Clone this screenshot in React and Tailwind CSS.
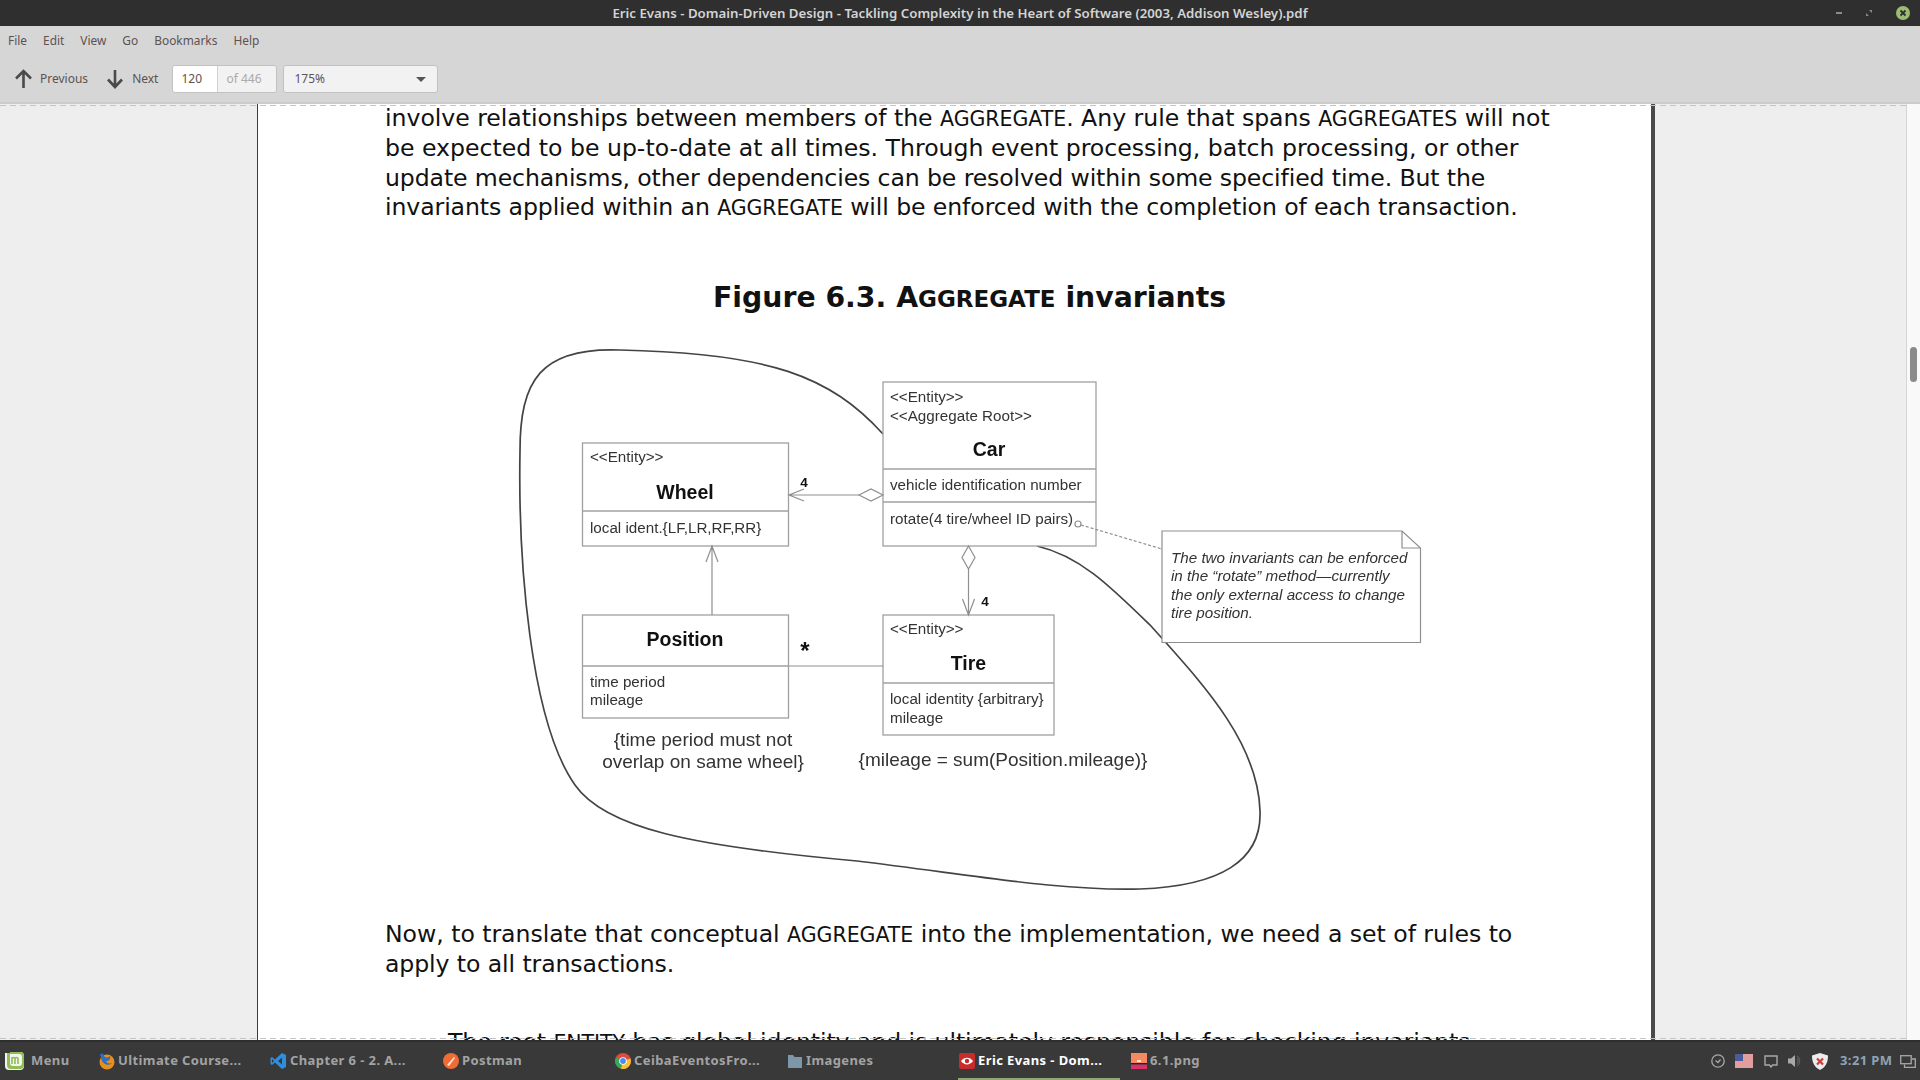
import React from 'react';

const menus = ['File', 'Edit', 'View', 'Go', 'Bookmarks', 'Help'];

const Agg = ({ children }) => <span className="text-[20.5px]">{children}</span>;

const MintIcon = () => (
  <svg width="21" height="20" viewBox="0 0 21 20">
    <path d="M1 2h5v-1h10a4 4 0 0 1 4 4v10a4 4 0 0 1-4 4H5a4 4 0 0 1-4-4z" fill="#f4f4f4" />
    <path d="M3 2h3v10a3 3 0 0 0 3 3h6a3 3 0 0 0 3-3V6a3 3 0 0 0-3-3H6V1h10a4 4 0 0 1 4 4v9a4 4 0 0 1-4 4H7a4 4 0 0 1-4-4z" fill="#8fc04f" />
    <path d="M8 6v7M8 8a1.5 1.5 0 0 1 3 0v5M11 8a1.5 1.5 0 0 1 3 0v5" fill="none" stroke="#8fc04f" strokeWidth="1.6" />
  </svg>
);

const FirefoxIcon = () => (
  <svg width="16" height="18" viewBox="0 0 16 18">
    <circle cx="8" cy="10" r="7.5" fill="#e98f1c" />
    <path d="M1 2c1 3 1 5 2 7 2 4 7 5 10 2-3 1-5 0-6-2 3 0 5-2 4-5-1 1-3 2-5 1-1-1-2-2-2-4-1 1-2 1-3 1z" fill="#2f6fc4" />
  </svg>
);

const VsIcon = () => (
  <svg width="17" height="18" viewBox="0 0 17 18">
    <path d="M12 1l4 2v12l-4 2-7-6.5L2 13 .5 12V6L2 5l3 2.500zM12 5.500L8 9l4 3.500zM2 7v4l2-2z" fill="#2d8fe0" />
  </svg>
);

const PostmanIcon = () => (
  <svg width="16" height="16" viewBox="0 0 16 16">
    <circle cx="8" cy="8" r="8" fill="#ef6c35" />
    <path d="M4 12l7-8 1 1-6 8z" fill="#fbe3d8" />
  </svg>
);

const ChromeIcon = () => (
  <svg width="16" height="16" viewBox="0 0 16 16">
    <circle cx="8" cy="8" r="8" fill="#dd4b3e" />
    <path d="M8 8L1 4.500A8 8 0 0 0 6 15.800z" fill="#3aa757" />
    <path d="M8 8l7.500-2.500A8 8 0 0 1 6 15.800z" fill="#f7c42e" />
    <circle cx="8" cy="8" r="3.800" fill="#fff" />
    <circle cx="8" cy="8" r="2.900" fill="#4a8af4" />
  </svg>
);

const FolderIcon = () => (
  <svg width="14" height="14" viewBox="0 0 14 14">
    <path d="M0 1h5l1.500 2H14v11H0z" fill="#7d97a8" />
  </svg>
);

const EvinceIcon = () => (
  <svg width="16" height="16" viewBox="0 0 16 16">
    <rect width="16" height="16" rx="2" fill="#c92a2a" />
    <path d="M2 8c3-4.500 9-4.500 12 0-3 4.500-9 4.500-12 0z" fill="#fff" />
    <circle cx="8" cy="8" r="2.200" fill="#c92a2a" />
  </svg>
);

const ImageIcon = () => (
  <svg width="16" height="16" viewBox="0 0 16 16">
    <rect width="16" height="10" fill="#f58a62" />
    <rect x="6" y="7" width="4" height="2" fill="#fde2c8" />
    <rect y="10" width="16" height="1.500" fill="#2b2020" />
    <rect y="11.500" width="16" height="4.500" fill="#d8326a" />
  </svg>
);

const Task = ({ icon, label, w, gap = 'gap-[3px]', active }) => (
  <div className={`relative h-full flex items-center ${gap} ${w}`}>
    <span className="flex shrink-0">{icon}</span>
    <span className={`text-[13px] font-bold tracking-[0.4px] whitespace-nowrap ${active ? 'text-white' : 'text-[#a3a3a3]'}`}>{label}</span>
    {active && <span className="absolute left-[-1px] w-[162px] bottom-0 h-[2px] bg-[#8fa86f]" />}
  </div>
);

const Box = ({ x, y, w, h, lines = [] }) => (
  <g fill="none" stroke="#a0a0a0" strokeWidth="1.300">
    <rect x={x} y={y} width={w} height={h} fill="#fff" />
    {lines.map((ly) => <line key={ly} x1={x} x2={x + w} y1={ly} y2={ly} />)}
  </g>
);

const Diagram = () => (
  <svg width="940" height="560" viewBox="500 340 940 560" className="block shrink-0 blur-[0.6px] font-['Liberation_Sans']">
    <path
      d="M883 433C830 375 770 352 620 349C540 346 520 380 520 450C518 560 530 720 575 784C605 827 690 845 857 860C980 875 1060 890 1140 888C1220 885 1262 860 1260 810C1258 740 1200 680 1151 625C1110 585 1080 555 1037 545"
      fill="none"
      stroke="#444"
      strokeWidth="1.700"
    />
    <Box x={883} y={381} w={213} h={164} lines={[468, 501]} />
    <Box x={582.500} y={442} w={206} h={103} lines={[510]} />
    <Box x={582.500} y={614} w={206} h={103} lines={[665]} />
    <Box x={883} y={614} w={171} h={120} lines={[682]} />
    <g fill="none" stroke="#8f8f8f" strokeWidth="1.200">
      <path d="M789 494H859M804 488L789 494L804 500" />
      <path d="M859 494L871 488L883 494L871 500Z" fill="#fff" />
      <path d="M712 614V545M706 561L712 545L718 561" />
      <path d="M968.500 568V614M962.500 598L968.500 614L974.500 598" />
      <path d="M968.500 545L975 556.500L968.500 568L962 556.500Z" fill="#fff" />
      <path d="M789 665H883" />
      <circle cx="1078" cy="523" r="3" fill="#fff" />
      <path d="M1081 524L1162 548" strokeDasharray="3 2" />
      <path d="M1162 530H1402L1420.500 547V641.500H1162ZM1402 530V547H1420.500" fill="#fff" />
    </g>
    <g fontSize="15.200" fill="#333">
      <text x="890" y="401">&lt;&lt;Entity&gt;&gt;</text>
      <text x="890" y="420">&lt;&lt;Aggregate Root&gt;&gt;</text>
      <text x="890" y="489">vehicle identification number</text>
      <text x="890" y="523">rotate(4 tire/wheel ID pairs)</text>
      <text x="590" y="461">&lt;&lt;Entity&gt;&gt;</text>
      <text x="590" y="532">local ident.{'{'}LF,LR,RF,RR{'}'}</text>
      <text x="590" y="686">time period</text>
      <text x="590" y="704">mileage</text>
      <text x="890" y="633">&lt;&lt;Entity&gt;&gt;</text>
      <text x="890" y="703">local identity {'{'}arbitrary{'}'}</text>
      <text x="890" y="722">mileage</text>
    </g>
    <g fontSize="19" fill="#333">
      <text x="703" y="745" textAnchor="middle">{'{'}time period must not</text>
      <text x="703" y="767" textAnchor="middle">overlap on same wheel{'}'}</text>
      <text x="1003" y="765" textAnchor="middle">{'{'}mileage = sum(Position.mileage){'}'}</text>
    </g>
    <g fontSize="19.500" fontWeight="700" fill="#111" textAnchor="middle">
      <text x="989" y="455">Car</text>
      <text x="685" y="498">Wheel</text>
      <text x="685" y="645">Position</text>
      <text x="968.500" y="669">Tire</text>
    </g>
    <g fontWeight="700" fill="#111" textAnchor="middle">
      <text x="804" y="486" fontSize="13.500">4</text>
      <text x="985" y="605" fontSize="13.500">4</text>
      <text x="805" y="658" fontSize="24">*</text>
    </g>
    <g fontSize="15.200" fontStyle="italic" fill="#333">
      <text x="1171" y="562">The two invariants can be enforced</text>
      <text x="1171" y="580">in the “rotate” method—currently</text>
      <text x="1171" y="599">the only external access to change</text>
      <text x="1171" y="617">tire position.</text>
    </g>
  </svg>
);

const App = () => (
  <div className="w-[1920px] h-[1080px] overflow-hidden flex flex-col font-['Noto_Sans',sans-serif] bg-[#d6d6d6]">
    <div className="relative h-[26px] shrink-0 bg-[#2f2f2f] flex items-center justify-center pt-[2px]">
      <span className="text-[13.25px] font-semibold text-[#d4d4d4] whitespace-nowrap">
        Eric Evans - Domain-Driven Design - Tackling Complexity in the Heart of Software (2003, Addison Wesley).pdf
      </span>
      <div className="absolute right-[10px] top-[6px] flex items-center gap-[24px]">
        <span className="w-[6px] h-[2px] bg-[#8b8b8b]" />
        <svg width="6" height="6" viewBox="0 0 6 6"><path d="M3 0h3v3zM0 3l3 3H0z" fill="#8b8b8b" /></svg>
        <svg width="14" height="14" viewBox="0 0 14 14">
          <circle cx="7" cy="7" r="7" fill="#9bbd73" />
          <path d="M4.500 4.500l5 5M9.500 4.500l-5 5" stroke="#2f2f2f" strokeWidth="1.800" />
        </svg>
      </div>
    </div>

    <div className="h-[28px] shrink-0 flex items-center pl-[8px] pt-[1px] gap-[16px] text-[11.9px] text-[#5d5252]">
      {menus.map((m) => <span key={m}>{m}</span>)}
    </div>

    <div className="h-[50px] shrink-0 flex items-center pl-[14px] pt-[2px] border-b-2 border-[#cccccc] text-[12px] text-[#5d5252]">
      <svg width="19" height="20" viewBox="0 0 19 20"><path d="M9.500 19V3M2 9.500L9.500 2 17 9.500" fill="none" stroke="#4a4a4a" strokeWidth="2.600" /></svg>
      <span className="ml-[7px]">Previous</span>
      <svg className="ml-[18px]" width="18" height="20" viewBox="0 0 18 20"><path d="M9 1v16M2 10.500L9 18l7-7.500" fill="none" stroke="#4a4a4a" strokeWidth="2.600" /></svg>
      <span className="ml-[8px]">Next</span>
      <div className="ml-[14px] w-[105px] h-[28px] flex rounded-[3px] border border-[#c2c2c2] overflow-hidden">
        <span className="w-[45px] bg-white flex items-center pl-[8px] border-r border-[#d2d2d2]">120</span>
        <span className="flex-1 bg-[#f2f2f2] flex items-center pl-[8px] text-[#aaaaaa]">of 446</span>
      </div>
      <div className="ml-[6px] w-[155px] h-[28px] rounded-[3px] border border-[#c2c2c2] bg-[#f2f2f2] flex items-center justify-between pl-[10px] pr-[11px]">
        <span>175%</span>
        <span className="w-0 h-0 border-x-[5px] border-x-transparent border-t-[5px] border-t-[#5d5252]" />
      </div>
    </div>

    <div className="relative flex-1 min-h-0 flex overflow-hidden">
      <div className="w-[258px] shrink-0 bg-[#eeeeee] border-r border-[#3c3c3c]" />
      <div className="w-[1393px] shrink-0 bg-white pl-[127px] font-['DejaVu_Sans',sans-serif] text-[23.6px] leading-[29.3px] text-[#111] whitespace-nowrap overflow-hidden">
        <p className="tracking-[-0.03px]">involve relationships between members of the <Agg>AGGREGATE</Agg>. Any rule that spans <Agg>AGGREGATES</Agg> will not</p>
        <p>be expected to be up-to-date at all times. Through event processing, batch processing, or other</p>
        <p className="tracking-[-0.12px]">update mechanisms, other dependencies can be resolved within some specified time. But the</p>
        <p className="tracking-[-0.1px]">invariants applied within an <Agg>AGGREGATE</Agg> will be enforced with the completion of each transaction.</p>
        <h2 className="mt-[58px] ml-[328px] h-[34px] leading-[34px] text-[28.3px] font-bold">
          Figure 6.3. A<span className="text-[23px]">GGREGATE</span> invariants
        </h2>
        <div className="ml-[115px] mt-[26px]">
          <Diagram />
        </div>
        <p className="mt-[19px] tracking-[-0.04px]">Now, to translate that conceptual <Agg>AGGREGATE</Agg> into the implementation, we need a set of rules to</p>
        <p className="tracking-[-0.1px]">apply to all transactions.</p>
        <p className="mt-[48px] ml-[63px] tracking-[-0.08px]">The root <Agg>ENTITY</Agg> has global identity and is ultimately responsible for checking invariants</p>
      </div>
      <div className="w-[4px] shrink-0 bg-[#4a4a4a]" />
      <div className="w-[252px] shrink-0 bg-[#eeeeee] border-r border-[#d5d5d5]" />
      <div className="flex-1 bg-[#f9f9f9] pt-[243px] pl-[3px]">
        <div className="w-[7px] h-[35px] rounded-full bg-[#8a8a8a]" />
      </div>
      <div className="absolute left-0 right-[14px] top-[1px] h-px bg-[repeating-linear-gradient(90deg,#c4c4c4_0_6px,transparent_6px_10px)]" />
      <div className="absolute left-0 right-[14px] bottom-[1px] h-px bg-[repeating-linear-gradient(90deg,#c4c4c4_0_6px,transparent_6px_10px)]" />
    </div>

    <div className="h-[40px] shrink-0 bg-[#393939] border-t-2 border-[#2e2e2e] flex items-center pl-[4px] relative">
      <Task icon={<MintIcon />} label="Menu" w="w-[95px]" gap="gap-[6px]" />
      <Task icon={<FirefoxIcon />} label="Ultimate Course..." w="w-[171px]" />
      <Task icon={<VsIcon />} label="Chapter 6 - 2. A..." w="w-[173px]" />
      <Task icon={<PostmanIcon />} label="Postman" w="w-[172px]" />
      <Task icon={<ChromeIcon />} label="CeibaEventosFro..." w="w-[173px]" />
      <Task icon={<FolderIcon />} label="Imagenes" w="w-[171px]" gap="gap-[4px]" />
      <Task icon={<EvinceIcon />} label="Eric Evans - Dom..." w="w-[172px]" active />
      <Task icon={<ImageIcon />} label="6.1.png" w="w-[80px]" />
      <div className="ml-auto flex items-center pr-[4px]">
        <svg width="14" height="14" viewBox="0 0 14 14" fill="none" stroke="#a8a8a8" strokeWidth="1.300"><circle cx="7" cy="7" r="6.200" /><path d="M4.500 6.500L7 8.500l2.500-3" /></svg>
        <svg className="ml-[10px]" width="18" height="14" viewBox="0 0 18 14">
          <rect width="18" height="14" fill="#f2f2f2" />
          <path d="M0 1h18M0 3h18M0 5h18M0 7h18M0 9h18M0 11h18M0 13h18" stroke="#cf4a4a" strokeWidth="1" />
          <rect width="8" height="7" fill="#4a5d9a" />
        </svg>
        <svg className="ml-[11px]" width="14" height="13" viewBox="0 0 14 13" fill="none" stroke="#a8a8a8" strokeWidth="1.400"><path d="M1 1h12v9H8.500L7 12l-1.500-2H1z" /></svg>
        <svg className="ml-[10px]" width="15" height="14" viewBox="0 0 15 14">
          <path d="M0 4.500h3L7 1v12L3 9.500H0z" fill="#a8a8a8" />
          <path d="M9 2a6 6 0 0 1 0 10M9 4.500a3.500 3.500 0 0 1 0 5" fill="none" stroke="#5c5c5c" strokeWidth="1.200" />
        </svg>
        <svg className="ml-[9px]" width="16" height="17" viewBox="0 0 16 17">
          <path d="M8 0l8 2.500C16 9 14 14 8 17 2 14 0 9 0 2.500z" fill="#ececec" />
          <path d="M5 5.500l6 6M11 5.500l-6 6" stroke="#c93f3f" strokeWidth="2.200" />
        </svg>
        <span className="ml-[12px] w-[52px] text-[13px] font-bold tracking-[0.4px] text-[#8fa3b5] whitespace-nowrap">3:21 PM</span>
        <svg className="ml-[8px]" width="16" height="13" viewBox="0 0 16 13" fill="none" stroke="#a8a8a8" strokeWidth="1.300"><rect x="0.700" y="0.700" width="10.500" height="8" /><path d="M12 4h3.300v8.300H4.500V9.500" /></svg>
      </div>
    </div>
  </div>
);

export default App;
